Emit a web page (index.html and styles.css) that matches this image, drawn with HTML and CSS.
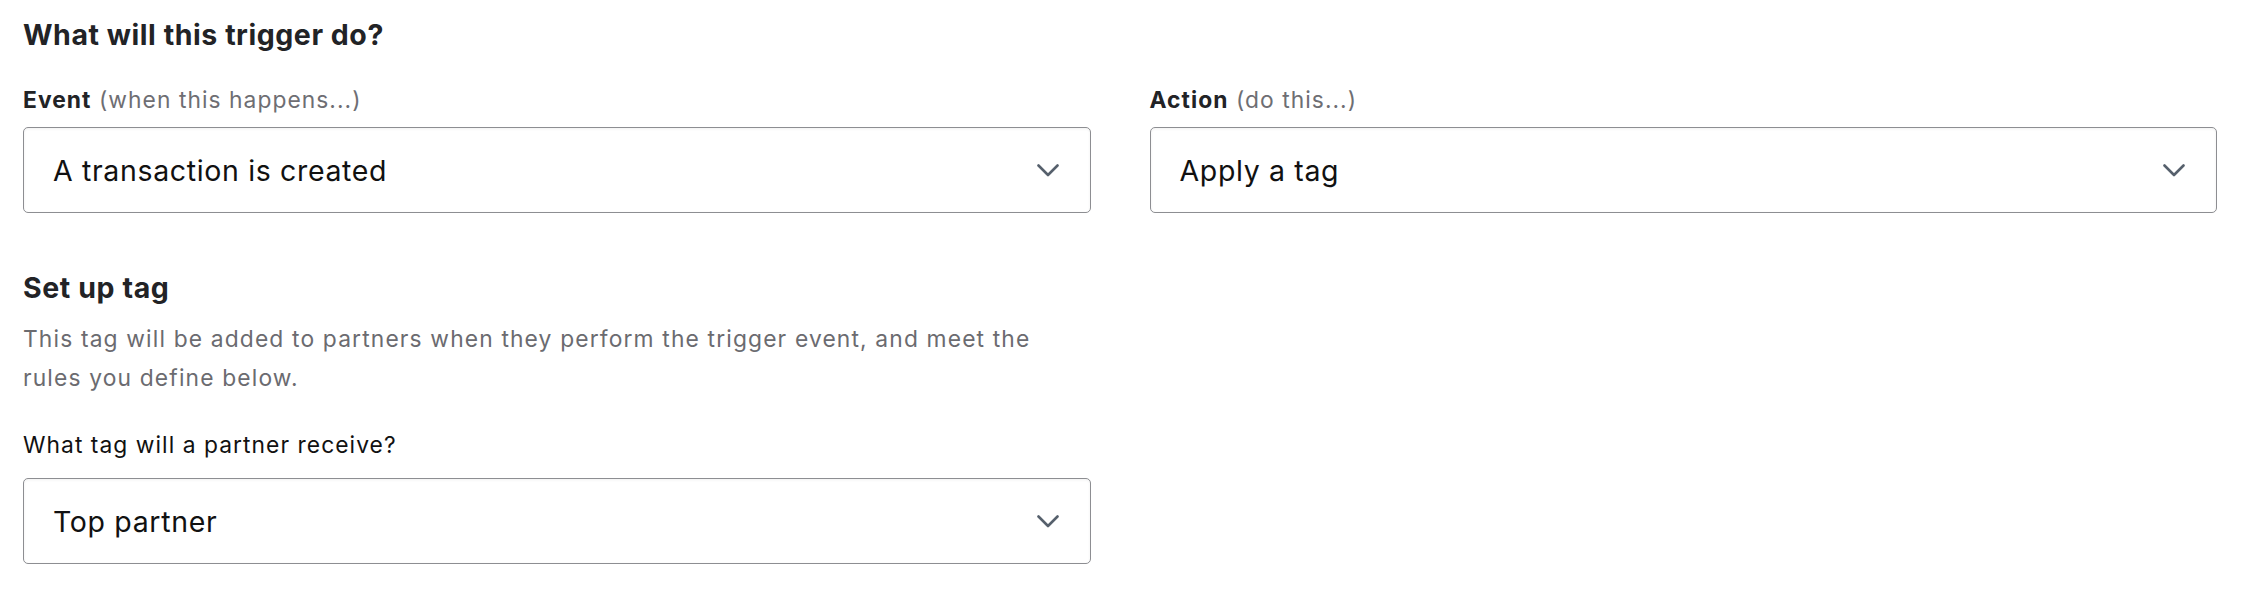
FILE: index.html
```html
<!DOCTYPE html>
<html>
<head>
    <title>Trigger setup</title>
    <link rel="stylesheet" href="styles.css">
</head>
<body>
    <div class="trigger-form">
        <h2 class="section-title">What will this trigger do?</h2>
        <div class="field-row">
            <div class="field">
                <label class="field-label"><strong>Event</strong> <span class="hint">(when this happens...)</span></label>
                <div class="select">
                    <span class="select-value">A transaction is created</span>
                    <svg class="chevron" viewBox="0 0 22 13" width="22" height="13"><path d="M1.5 1.5 L11 11 L20.5 1.5" fill="none" stroke="currentColor" stroke-width="2.6" stroke-linecap="round" stroke-linejoin="round"/></svg>
                </div>
            </div>
            <div class="field">
                <label class="field-label"><strong>Action</strong> <span class="hint">(do this...)</span></label>
                <div class="select">
                    <span class="select-value">Apply a tag</span>
                    <svg class="chevron" viewBox="0 0 22 13" width="22" height="13"><path d="M1.5 1.5 L11 11 L20.5 1.5" fill="none" stroke="currentColor" stroke-width="2.6" stroke-linecap="round" stroke-linejoin="round"/></svg>
                </div>
            </div>
        </div>

        <div class="tag-setup">
            <h3 class="sub-title">Set up tag</h3>
            <p class="description">This tag will be added to partners when they perform the trigger event, and meet the rules you define below.</p>
            <div class="field">
                <label class="field-label plain">What tag will a partner receive?</label>
                <div class="select">
                    <span class="select-value">Top partner</span>
                    <svg class="chevron" viewBox="0 0 22 13" width="22" height="13"><path d="M1.5 1.5 L11 11 L20.5 1.5" fill="none" stroke="currentColor" stroke-width="2.6" stroke-linecap="round" stroke-linejoin="round"/></svg>
                </div>
            </div>
        </div>
    </div>
</body>
</html>
```

FILE: styles.css
```css
body {
    margin: 0;
    background-color: #fff;
    font-family: Inter, "Noto Sans", sans-serif;
    color: #1f1f1f;
}
.trigger-form {
    padding: 18px 25px 0 23px;
}
.section-title {
    margin: 0 0 34px;
    font-size: 28.5px;
    font-weight: 700;
    line-height: 34px;
    letter-spacing: 0.55px;
    color: #222326;
}
.field-row {
    display: grid;
    grid-template-columns: 1fr 1fr;
    gap: 59px;
}
.field-label {
    display: block;
    font-size: 22.8px;
    line-height: 28px;
    letter-spacing: 1.05px;
    margin-bottom: 13px;
    color: #222326;
}
.field-label strong {
    font-weight: 700;
}
.field-label .hint {
    color: #6e6e73;
}
.field-label.plain {
    margin-bottom: 19px;
    color: #111;
}
.select {
    display: flex;
    align-items: center;
    justify-content: space-between;
    height: 86px;
    box-sizing: border-box;
    padding: 0 31px 0 29px;
    border: 1.5px solid #8d8e92;
    border-radius: 5px;
    background-color: #fff;
    box-shadow: inset 0 1px 3px rgba(0, 0, 0, 0.06);
}
.select-value {
    font-size: 28.5px;
    letter-spacing: 0.65px;
    color: #111;
}
.chevron {
    color: #56606c;
}
.tag-setup {
    width: 1068px;
    margin-top: 58px;
}
.sub-title {
    margin: 0 0 15px;
    font-size: 28.5px;
    font-weight: 700;
    line-height: 34px;
    letter-spacing: 0.6px;
    color: #222326;
}
.description {
    max-width: 1045px;
    margin: 0 0 34px;
    font-size: 22.8px;
    line-height: 38.5px;
    letter-spacing: 1.15px;
    color: #6b6b70;
}
```
